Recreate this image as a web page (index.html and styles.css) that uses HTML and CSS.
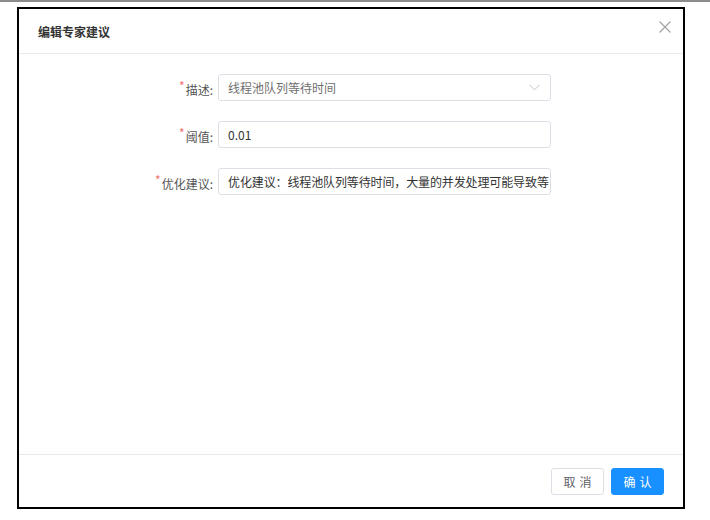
FILE: index.html
```html
<!DOCTYPE html>
<html lang="zh">
<head>
  <meta charset="UTF-8">
  <title>编辑专家建议</title>
  <link rel="stylesheet" href="styles.css">
</head>
<body>
<div class="topbar"></div>
<div class="dialog">
  <div class="dialog-header">
    <span class="title">编辑专家建议</span>
    <span class="close">
      <svg width="12" height="12" viewBox="0 0 12 12"><path d="M0.5 0.5L11.5 11.5M11.5 0.5L0.5 11.5" stroke="#a0a0a0" stroke-width="1.1" fill="none"/></svg>
    </span>
  </div>
  <div class="dialog-body">
    <div class="form">
      <div class="row">
        <label class="label required">描述:</label>
        <div class="input select">
          <span class="value muted">线程池队列等待时间</span>
          <svg class="arrow" width="11" height="7" viewBox="0 0 11 7"><path d="M0.5 0.8L5.5 5.8L10.5 0.8" stroke="#c0c4cc" stroke-width="1" fill="none"/></svg>
        </div>
      </div>
      <div class="row">
        <label class="label required">阈值:</label>
        <div class="input"><span class="value">0.01</span></div>
      </div>
      <div class="row">
        <label class="label required">优化建议:</label>
        <div class="input long"><span class="value">优化建议：线程池队列等待时间，大量的并发处理可能导致等</span></div>
      </div>
    </div>
  </div>
  <div class="dialog-footer">
    <button class="btn">取消</button>
    <button class="btn primary">确认</button>
  </div>
</div>
</body>
</html>
```

FILE: styles.css
```css
*{margin: 0;padding: 0;box-sizing: border-box;}
body{
  width: 710px;
  height: 520px;
  background: #fff;
  font-family: "Noto Sans CJK SC", "Liberation Sans", sans-serif;
  font-size: 12px;
  color: #333;
}
.topbar{
  height: 2px;
  background: #8c8c8c;
}

/* 弹窗 */
.dialog{
  width: 668px;
  height: 502px;
  margin: 5px 0 0 17px;
  border: 2px solid #000;
  display: flex;
  flex-direction: column;
}
.dialog-header{
  height: 45px;
  padding: 0 12px 0 19px;
  border-bottom: 1px solid #e9e9e9;
  display: flex;
  align-items: center;
  justify-content: space-between;
}
.title{
  font-size: 12px;
  font-weight: bold;
  color: #333;
  padding-top: 1px;
}
.close{
  display: flex;
  margin-top: -8px;
}

/* 表单 */
.dialog-body{
  flex: 1;
  padding-top: 20px;
}
.form{
  display: flex;
  flex-direction: column;
  gap: 20px;
}
.row{
  display: flex;
  align-items: center;
  height: 27px;
}
.label{
  width: 199px;
  text-align: right;
  padding-right: 5px;
  color: #555;
  font-size: 12px;
}
.required::before{
  content: '*';
  color: #f56c6c;
  font-size: 12px;
  vertical-align: 4px;
  margin-right: 1px;
}
.input{
  width: 333px;
  height: 27px;
  border: 1px solid #dcdfe6;
  border-radius: 3px;
  padding: 0 9px;
  display: flex;
  align-items: center;
  overflow: hidden;
}
.input.long{
  padding-right: 0;
}
.value{
  white-space: nowrap;
  color: #333;
  font-size: 12px;
}
.input.long .value{
  letter-spacing: -0.12px;
}
.value.muted{
  color: #707070;
}
.select{
  justify-content: space-between;
}
.arrow{
  margin-right: 1px;
}

/* 底部按钮 */
.dialog-footer{
  height: 53px;
  border-top: 1px solid #e9e9e9;
  display: flex;
  justify-content: flex-end;
  align-items: center;
  gap: 7px;
  padding: 0 19px 0 0;
}
.btn{
  width: 53px;
  height: 27px;
  border: 1px solid #dcdfe6;
  border-radius: 3px;
  background: #fff;
  color: #606266;
  font-family: "Noto Sans CJK SC", "Liberation Sans", sans-serif;
  font-size: 12px;
  letter-spacing: 4px;
  text-indent: 4px;
}
.btn.primary{
  background: #1890ff;
  border-color: #1890ff;
  color: #fff;
}
```
